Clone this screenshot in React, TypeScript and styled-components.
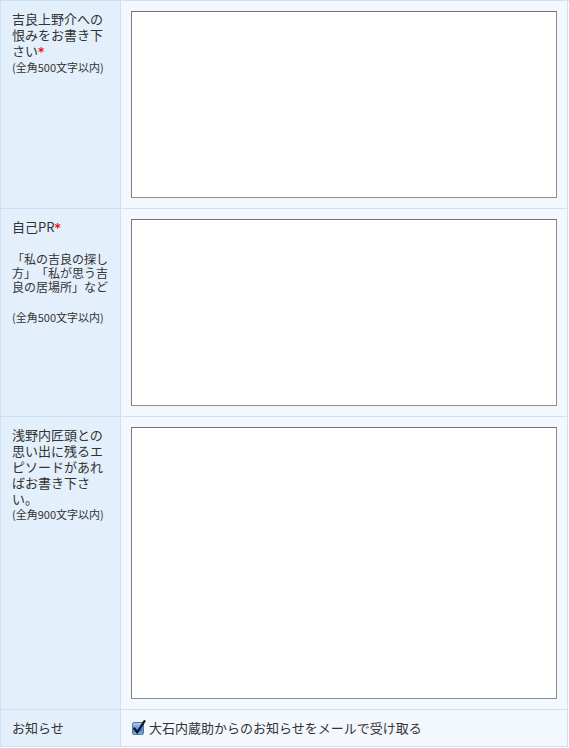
import React from "react";
import styled, { createGlobalStyle } from "styled-components";

const Global = createGlobalStyle`
  html, body { margin: 0; padding: 0; background: #ffffff; }
  body {
    font-family: "Noto Sans CJK JP", "Noto Sans", sans-serif;
    color: #333333;
    text-spacing-trim: space-all;
  }
`;

const Form = styled.div`
  width: 568px;
  display: grid;
  grid-template-columns: 120px 447px;
  border-left: 1px solid #cde0f6;
  border-top: 1px solid #cde0f6;
`;

const LabelCell = styled.div`
  box-sizing: border-box;
  background: #e4effc;
  border-right: 1px solid #cde0f6;
  border-bottom: 1px solid #cde0f6;
  padding: 10px 8px 10px 11px;
  font-size: 13px;
  line-height: 16px;
  color: #333333;
  text-spacing-trim: space-all;
`;

const FieldCell = styled.div`
  box-sizing: border-box;
  background: #f3f8fe;
  border-right: 1px solid #cde0f6;
  border-bottom: 1px solid #cde0f6;
  padding: 10px;
  display: flex;
  align-items: center;
  font-size: 13px;
  line-height: 16px;
  color: #333333;
`;

const Required = styled.span`
  color: #ee1111;
  font-family: "DejaVu Sans", sans-serif;
  font-weight: bold;
  font-size: 12px;
`;

const Note = styled.div<{ $gap?: number }>`
  font-size: 11px;
  line-height: 14px;
  margin-top: ${(p) => p.$gap ?? 0}px;
`;

const Description = styled.div`
  font-size: 12px;
  line-height: 14px;
  margin-top: 16px;
  text-spacing-trim: space-all;
`;

const Area = styled.textarea<{ $h: number }>`
  box-sizing: border-box;
  display: block;
  width: 427px;
  height: ${(p) => p.$h}px;
  margin: 0;
  padding: 2px;
  resize: none;
  background: #ffffff;
  border: 1px solid #8e8e8e;
  border-top-color: #727272;
  border-left-color: #7d7d7d;
  outline: none;
  font-family: inherit;
  font-size: 13px;
`;

const CheckLabel = styled.label`
  display: flex;
  align-items: center;
  gap: 5px;
  cursor: pointer;
`;

const Box = styled.span`
  position: relative;
  box-sizing: border-box;
  width: 12px;
  height: 13px;
  margin-left: 1px;
  border: 1px solid #5f7390;
  border-radius: 2px;
  background: linear-gradient(#a9cbf3 0%, #5e97e2 50%, #2f72d2 55%, #7db5f2 100%);
  flex: none;
`;

const Tick = styled.svg`
  position: absolute;
  left: -1px;
  top: -3px;
  width: 14px;
  height: 15px;
`;

function CheckBox() {
  return (
    <Box role="checkbox" aria-checked="true">
      <Tick viewBox="0 0 14 15">
        <path
          d="M2.5 8.5 L5.2 12.5 L12.5 1.2"
          fill="none"
          stroke="#111111"
          strokeWidth="2.2"
          strokeLinecap="round"
          strokeLinejoin="round"
        />
      </Tick>
    </Box>
  );
}

export default function App() {
  return (
    <>
      <Global />
      <Form>
        <LabelCell>
          吉良上野介への恨みをお書き下さい<Required>*</Required>
          <Note>(全角500文字以内)</Note>
        </LabelCell>
        <FieldCell>
          <Area $h={187} />
        </FieldCell>

        <LabelCell>
          自己PR<Required>*</Required>
          <Description>「私の吉良の探し方」「私が思う吉良の居場所」など</Description>
          <Note $gap={16}>(全角500文字以内)</Note>
        </LabelCell>
        <FieldCell>
          <Area $h={187} />
        </FieldCell>

        <LabelCell>
          浅野内匠頭との思い出に残るエピソードがあればお書き下さい。
          <Note>(全角900文字以内)</Note>
        </LabelCell>
        <FieldCell>
          <Area $h={272} />
        </FieldCell>

        <LabelCell>お知らせ</LabelCell>
        <FieldCell>
          <CheckLabel>
            <CheckBox />
            大石内蔵助からのお知らせをメールで受け取る
          </CheckLabel>
        </FieldCell>
      </Form>
    </>
  );
}
